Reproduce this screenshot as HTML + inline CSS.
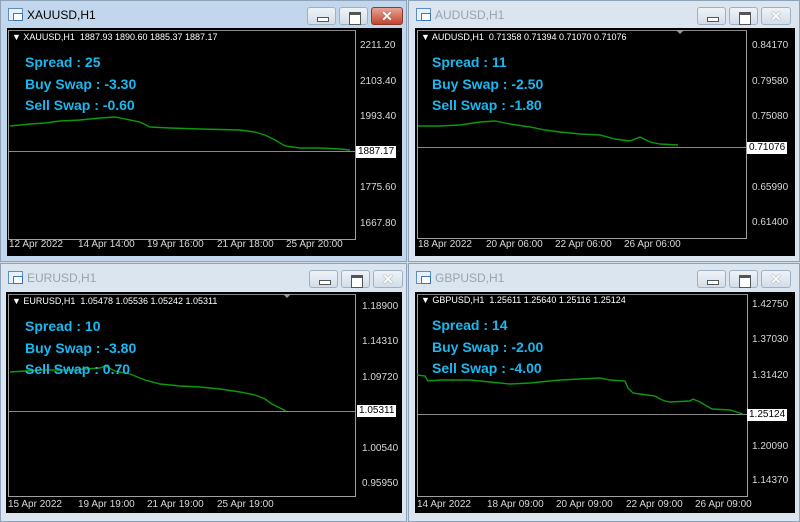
<!DOCTYPE html>
<html><head><meta charset="utf-8"><style>
*{margin:0;padding:0;box-sizing:border-box}
body{width:800px;height:522px;background:#d0dbe6;position:relative;overflow:hidden;font-family:"Liberation Sans",sans-serif}
.win{position:absolute;border:1px solid #8fa3b8;background:#dbe5ef}
.win.act{background:#c2d7ec}
.title{position:absolute;left:26px;top:7px;font-size:12px;color:#9aa3ab}
.act .title{color:#000}
.ico{position:absolute;left:7px;top:7px;width:15px;height:13px;border:1px solid #5b8fc4;background:#e8f1fb}
.ico:after{content:"";position:absolute;left:4px;top:4px;width:8px;height:6px;border:1px solid #3a76b8;background:#fff}
.btn{position:absolute;top:6px;width:29px;height:18px;border:1px solid #9fb0c2;border-radius:3px;background:linear-gradient(#eef3f8,#d3dde8)}
.btn.min:after{content:"";position:absolute;left:9px;top:9px;width:10px;height:3px;background:#fff;border:1px solid #555}
.btn.max:after{content:"";position:absolute;left:9px;top:4px;width:10px;height:9px;border:1px solid #555;border-top-width:3px;background:#fff}
.btn.cls{font-size:14px;font-weight:bold;color:#fff;text-align:center;line-height:16px;text-shadow:0 0 1px #444}
.act .btn.cls{background:linear-gradient(#e9a394,#c2452d);border-color:#8a3a2c}
.blk{position:absolute;background:#000}
.plot{position:absolute;border:1px solid #a0a0a0;border-top-color:#888}
.tk{position:absolute;font-size:9px;color:#fff;white-space:pre}
.sp{position:absolute;font-size:14px;font-weight:bold;color:#1ab8f0}
.ax{position:absolute;font-size:10px;color:#d8d8d8}
.box{position:absolute;font-size:10px;color:#000;background:#fff;padding:0 2px;height:12px;line-height:12px}
.dt{position:absolute;font-size:10px;color:#d8d8d8}
svg{position:absolute;left:0;top:0}
</style></head><body>

<!-- Window 1 -->
<div class="win act" style="left:0;top:0;width:407px;height:262px">
<div class="ico"></div><div class="title">XAUUSD,H1</div>
<div class="btn min" style="left:306px"></div><div class="btn max" style="left:338px"></div><div class="btn cls" style="left:370px;width:32px">✕</div>
</div>
<div class="blk" style="left:7px;top:28px;width:395px;height:228px"></div>
<div class="plot" style="left:8px;top:30px;width:348px;height:210px"></div>

<!-- Window 2 -->
<div class="win" style="left:408px;top:0;width:392px;height:262px">
<div class="ico"></div><div class="title">AUDUSD,H1</div>
<div class="btn min" style="left:288px"></div><div class="btn max" style="left:320px"></div><div class="btn cls" style="left:352px;width:30px">✕</div>
</div>
<div class="blk" style="left:415px;top:28px;width:380px;height:228px"></div>
<div class="plot" style="left:417px;top:30px;width:330px;height:209px"></div>

<!-- Window 3 -->
<div class="win" style="left:0;top:263px;width:407px;height:259px">
<div class="ico"></div><div class="title">EURUSD,H1</div>
<div class="btn min" style="left:308px"></div><div class="btn max" style="left:340px"></div><div class="btn cls" style="left:372px;width:30px">✕</div>
</div>
<div class="blk" style="left:6px;top:292px;width:396px;height:221px"></div>
<div class="plot" style="left:8px;top:294px;width:348px;height:203px"></div>

<!-- Window 4 -->
<div class="win" style="left:408px;top:263px;width:392px;height:259px">
<div class="ico"></div><div class="title">GBPUSD,H1</div>
<div class="btn min" style="left:288px"></div><div class="btn max" style="left:320px"></div><div class="btn cls" style="left:352px;width:30px">✕</div>
</div>
<div class="blk" style="left:415px;top:292px;width:380px;height:221px"></div>
<div class="plot" style="left:417px;top:294px;width:331px;height:203px"></div>

<svg width="800" height="522">
<g stroke="#888" stroke-width="1">
<line x1="9" y1="151.5" x2="355" y2="151.5"/>
<line x1="418" y1="147.5" x2="746" y2="147.5"/>
<line x1="9" y1="411.5" x2="355" y2="411.5"/>
<line x1="418" y1="414.5" x2="747" y2="414.5"/>
</g>
<g fill="none" stroke="#0a9a0a" stroke-width="1.4">
<polyline points="10,126 20,125 30,124 45,123 60,121 80,120 100,118 115,117 125,119 140,122 150,127 170,128 200,129 240,130 255,132 265,135 275,140 285,146 300,148 320,148 340,149 350,150"/>
<polyline points="418,126 440,126 460,125 480,122 495,121 510,124 530,127 545,130 560,132 580,134 600,135 615,139 630,141 640,137 650,142 660,144 678,145"/>
<polyline points="10,372 25,371 40,370 70,370 100,368 105,366 115,371 130,374 145,380 160,384 180,386 200,387 220,389 240,392 255,395 265,399 272,404 280,408 286,411"/>
<polyline points="417,375 425,376 428,381 440,380 470,380 490,382 510,384 530,383 540,382 560,380 580,379 600,378 610,380 625,381 628,388 633,393 640,394 655,396 660,399 665,401 670,402 690,401 693,399 700,402 705,405 712,409 730,410 743,414"/>
</g>
<g fill="#999"><polygon points="676,30 684,30 680,34"/><polygon points="283,294 291,294 287,298"/></g>
</svg>

<!-- texts W1 -->
<div class="tk" style="left:12px;top:32px">▼ XAUUSD,H1  1887.93 1890.60 1885.37 1887.17</div>
<div class="sp" style="left:25px;top:54px">Spread : 25</div>
<div class="sp" style="left:25px;top:76px">Buy Swap : -3.30</div>
<div class="sp" style="left:25px;top:97px">Sell Swap : -0.60</div>
<div class="ax" style="left:360px;top:40px">2211.20</div>
<div class="ax" style="left:360px;top:76px">2103.40</div>
<div class="ax" style="left:360px;top:111px">1993.40</div>
<div class="box" style="left:356px;top:146px">1887.17</div>
<div class="ax" style="left:360px;top:182px">1775.60</div>
<div class="ax" style="left:360px;top:218px">1667.80</div>
<div class="dt" style="left:9px;top:239px">12 Apr 2022</div>
<div class="dt" style="left:78px;top:239px">14 Apr 14:00</div>
<div class="dt" style="left:147px;top:239px">19 Apr 16:00</div>
<div class="dt" style="left:217px;top:239px">21 Apr 18:00</div>
<div class="dt" style="left:286px;top:239px">25 Apr 20:00</div>

<!-- W2 -->
<div class="tk" style="left:421px;top:32px">▼ AUDUSD,H1  0.71358 0.71394 0.71070 0.71076</div>
<div class="sp" style="left:432px;top:54px">Spread : 11</div>
<div class="sp" style="left:432px;top:76px">Buy Swap : -2.50</div>
<div class="sp" style="left:432px;top:97px">Sell Swap : -1.80</div>
<div class="ax" style="left:752px;top:40px">0.84170</div>
<div class="ax" style="left:752px;top:76px">0.79580</div>
<div class="ax" style="left:752px;top:111px">0.75080</div>
<div class="box" style="left:747px;top:142px">0.71076</div>
<div class="ax" style="left:752px;top:182px">0.65990</div>
<div class="ax" style="left:752px;top:217px">0.61400</div>
<div class="dt" style="left:418px;top:239px">18 Apr 2022</div>
<div class="dt" style="left:486px;top:239px">20 Apr 06:00</div>
<div class="dt" style="left:555px;top:239px">22 Apr 06:00</div>
<div class="dt" style="left:624px;top:239px">26 Apr 06:00</div>

<!-- W3 -->
<div class="tk" style="left:12px;top:296px">▼ EURUSD,H1  1.05478 1.05536 1.05242 1.05311</div>
<div class="sp" style="left:25px;top:318px">Spread : 10</div>
<div class="sp" style="left:25px;top:340px">Buy Swap : -3.80</div>
<div class="sp" style="left:25px;top:361px">Sell Swap : 0.70</div>
<div class="ax" style="left:362px;top:301px">1.18900</div>
<div class="ax" style="left:362px;top:336px">1.14310</div>
<div class="ax" style="left:362px;top:372px">1.09720</div>
<div class="box" style="left:357px;top:405px">1.05311</div>
<div class="ax" style="left:362px;top:443px">1.00540</div>
<div class="ax" style="left:362px;top:478px">0.95950</div>
<div class="dt" style="left:8px;top:499px">15 Apr 2022</div>
<div class="dt" style="left:78px;top:499px">19 Apr 19:00</div>
<div class="dt" style="left:147px;top:499px">21 Apr 19:00</div>
<div class="dt" style="left:217px;top:499px">25 Apr 19:00</div>

<!-- W4 -->
<div class="tk" style="left:421px;top:295px">▼ GBPUSD,H1  1.25611 1.25640 1.25116 1.25124</div>
<div class="sp" style="left:432px;top:317px">Spread : 14</div>
<div class="sp" style="left:432px;top:339px">Buy Swap : -2.00</div>
<div class="sp" style="left:432px;top:360px">Sell Swap : -4.00</div>
<div class="ax" style="left:752px;top:299px">1.42750</div>
<div class="ax" style="left:752px;top:334px">1.37030</div>
<div class="ax" style="left:752px;top:370px">1.31420</div>
<div class="box" style="left:747px;top:409px">1.25124</div>
<div class="ax" style="left:752px;top:441px">1.20090</div>
<div class="ax" style="left:752px;top:475px">1.14370</div>
<div class="dt" style="left:417px;top:499px">14 Apr 2022</div>
<div class="dt" style="left:487px;top:499px">18 Apr 09:00</div>
<div class="dt" style="left:556px;top:499px">20 Apr 09:00</div>
<div class="dt" style="left:626px;top:499px">22 Apr 09:00</div>
<div class="dt" style="left:695px;top:499px">26 Apr 09:00</div>
</body></html>
